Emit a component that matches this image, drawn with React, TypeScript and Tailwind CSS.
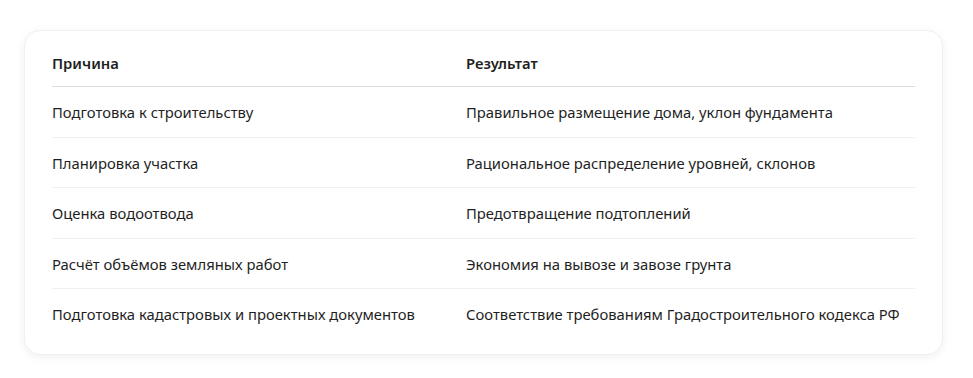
import React from 'react';

const rows: [string, string][] = [
  ['Подготовка к строительству', 'Правильное размещение дома, уклон фундамента'],
  ['Планировка участка', 'Рациональное распределение уровней, склонов'],
  ['Оценка водоотвода', 'Предотвращение подтоплений'],
  ['Расчёт объёмов земляных работ', 'Экономия на вывозе и завозе грунта'],
  ['Подготовка кадастровых и проектных документов', 'Соответствие требованиям Градостроительного кодекса РФ'],
];

const App: React.FC = () => {
  return (
    <div className="min-h-[378px] bg-white px-6 pt-[30px] text-[#1f1f1f]" style={{ fontFamily: '"Noto Sans", "Open Sans", sans-serif' }}>
      <div className="w-[919px] rounded-2xl border border-[#f0f0f0] bg-white px-[27px] pt-[9px] pb-[15px] shadow-[0_2px_10px_rgba(0,0,0,0.06)]">
        <div className="grid grid-cols-[414px_1fr] border-b border-[#dcdcdc] text-[14.8px] font-semibold">
          <div className="py-[11px] leading-[24px]">Причина</div>
          <div className="py-[11px] leading-[24px]">Результат</div>
        </div>
        {rows.map(([cause, result], i) => (
          <div
            key={i}
            className={`grid grid-cols-[414px_1fr] text-[14.8px] ${i < rows.length - 1 ? 'border-b border-[#f0f0f0]' : ''}`}
          >
            <div className="pt-[13.25px] pb-[12.25px] leading-[24px]">{cause}</div>
            <div className="pt-[13.25px] pb-[12.25px] leading-[24px]">{result}</div>
          </div>
        ))}
      </div>
    </div>
  );
};

export default App;
